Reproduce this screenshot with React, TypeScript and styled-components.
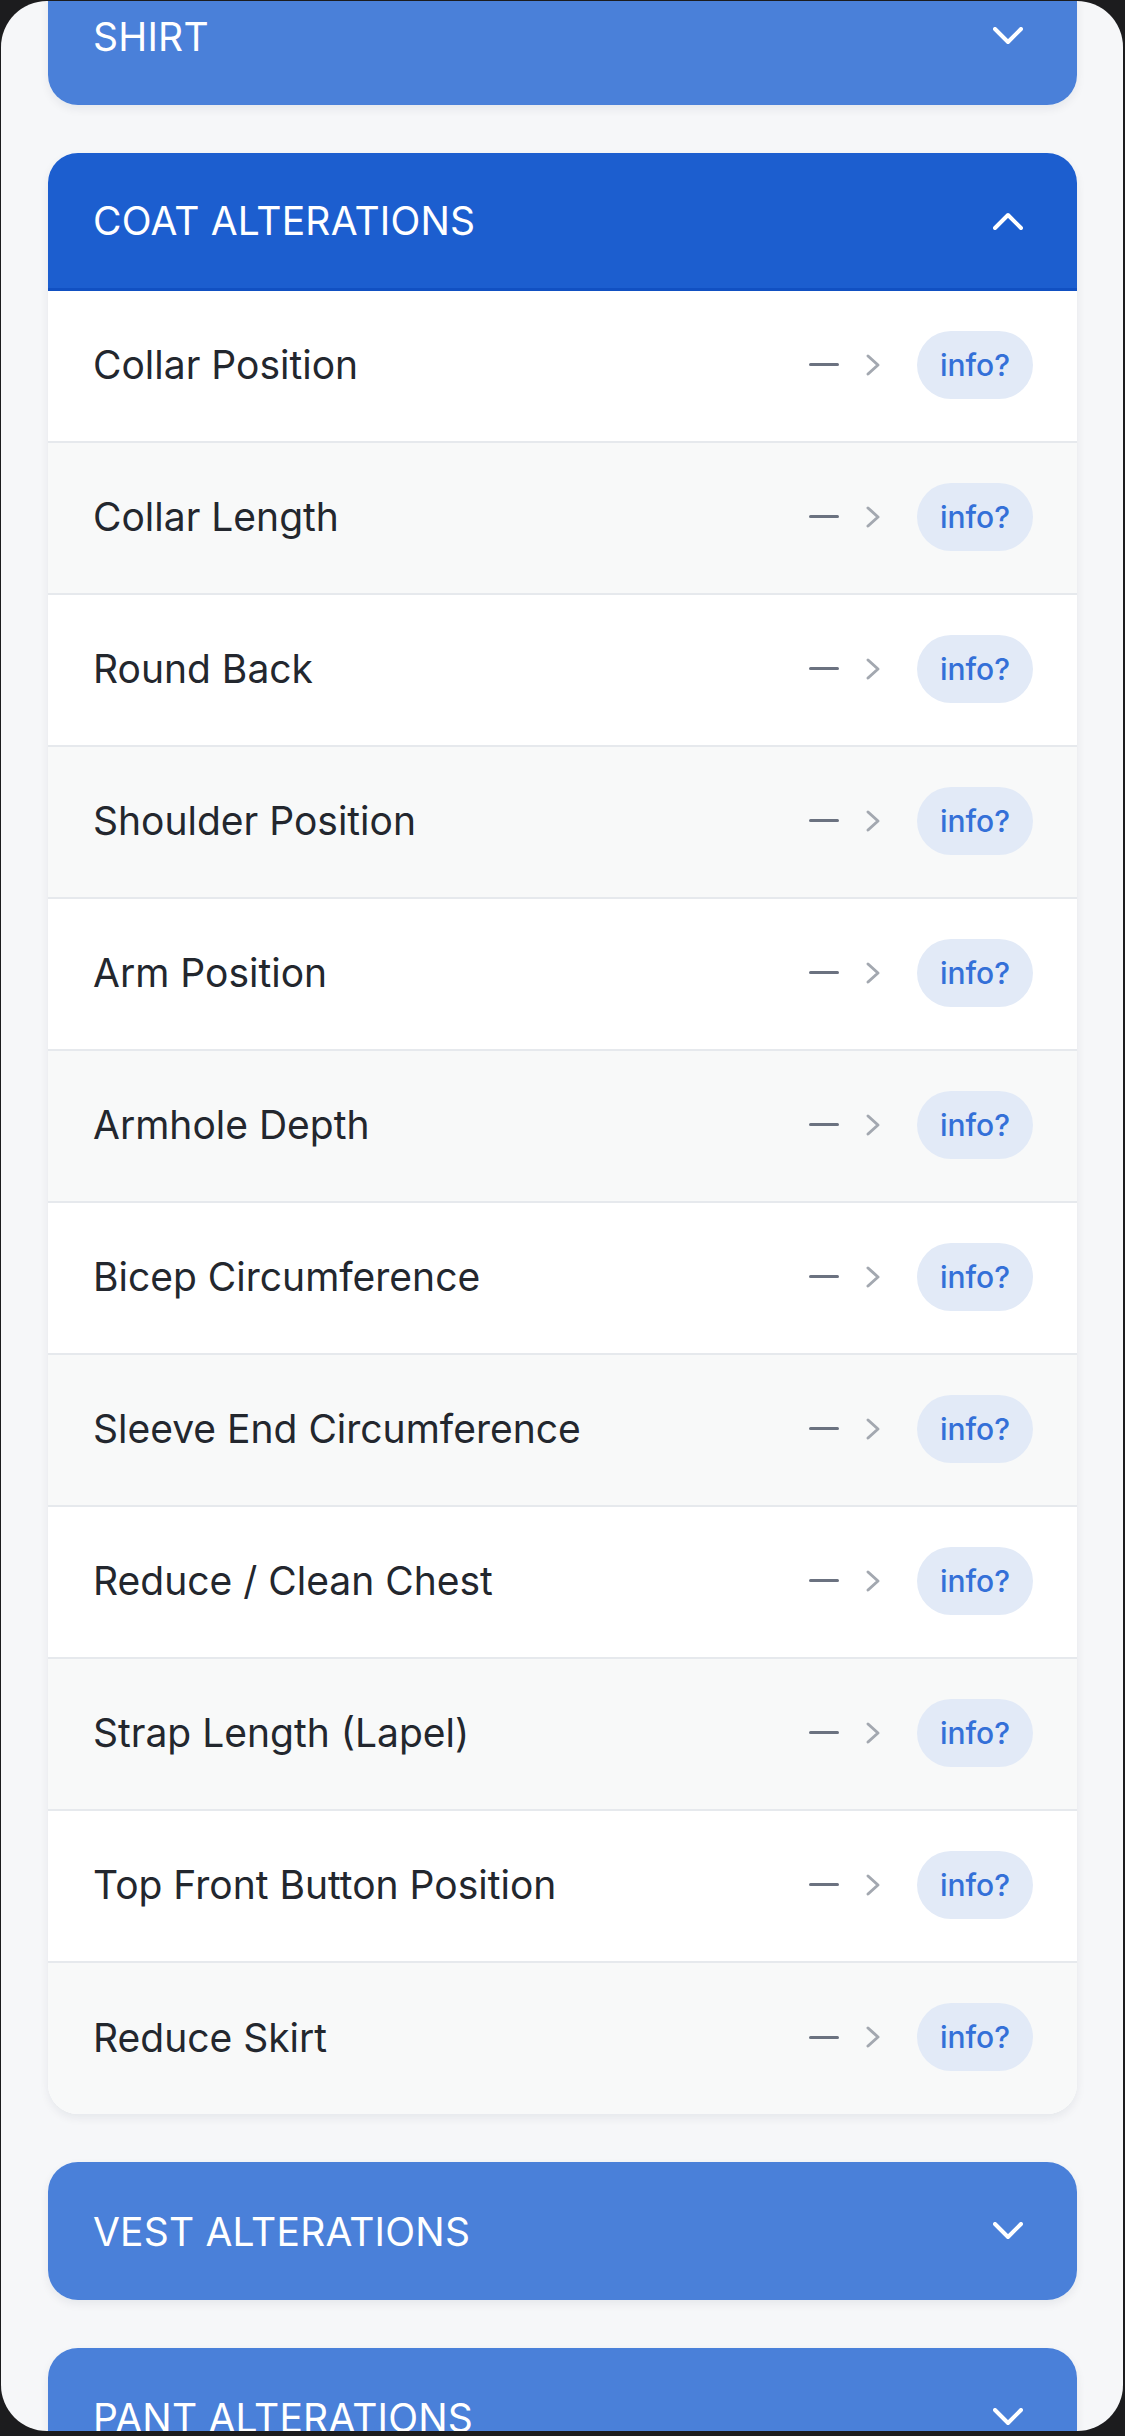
import styled, { createGlobalStyle } from "styled-components";

const GlobalStyle = createGlobalStyle`
    html, body {
        margin: 0;
        padding: 0;
        background: #1c1c1e;
    }
    * {
        box-sizing: border-box;
    }
`;

const Screen = styled.div`
    width: 1122px;
    height: 2430px;
    margin: 1px 0 0 1px;
    border-radius: 46px;
    overflow: hidden;
    background: #f6f7f9;
    font-family: Inter, "Liberation Sans", sans-serif;
`;

const List = styled.div`
    display: flex;
    flex-direction: column;
    gap: 48px;
    margin-top: -34px;
    padding: 0 46px 0 47px;
`;

const Card = styled.section`
    border-radius: 30px;
    overflow: hidden;
    background: #ffffff;
    box-shadow: 0 4px 10px rgba(20, 30, 50, 0.07);
`;

const Header = styled.div<{ $open?: boolean }>`
    height: 138px;
    display: flex;
    align-items: center;
    justify-content: space-between;
    padding: 0 54px 0 45px;
    background: ${props => (props.$open ? "#1c5ecf" : "#4a80d9")};
    border-bottom: ${props => (props.$open ? "3px solid #1150c2" : "none")};
    color: #ffffff;
`;

const Title = styled.span`
    font-size: 39px;
    font-weight: 400;
    letter-spacing: 0.2px;
    text-transform: uppercase;
`;

const Row = styled.div<{ $alt: boolean }>`
    height: 152px;
    display: flex;
    align-items: center;
    padding: 0 44px 3px 45px;
    background: ${props => (props.$alt ? "#f8f9f9" : "#ffffff")};
    border-bottom: 2px solid #e6e9ed;

    &:last-child {
        border-bottom: none;
        height: 151px;
    }
`;

const Label = styled.span`
    flex: 1;
    font-size: 39px;
    color: #23272e;
`;

const Dash = styled.span`
    width: 30px;
    height: 3px;
    border-radius: 2px;
    background: #6b7280;
`;

const Arrow = styled.svg`
    margin: 0 36px 0 26px;
    display: block;
`;

const InfoPill = styled.span`
    width: 116px;
    height: 68px;
    border-radius: 34px;
    background: #e2eaf7;
    color: #3470d8;
    font-size: 30px;
    font-weight: 500;
    display: flex;
    align-items: center;
    justify-content: center;
`;

const coatItems = [
    "Collar Position",
    "Collar Length",
    "Round Back",
    "Shoulder Position",
    "Arm Position",
    "Armhole Depth",
    "Bicep Circumference",
    "Sleeve End Circumference",
    "Reduce / Clean Chest",
    "Strap Length (Lapel)",
    "Top Front Button Position",
    "Reduce Skirt",
];

function Chevron({up}: { up?: boolean }) {
    return (
        <svg width="30" height="18" viewBox="0 0 30 18">
            <polyline
                points={up ? "2,16 15,3 28,16" : "2,2 15,15 28,2"}
                fill="none"
                stroke="#ffffff"
                strokeWidth="4"
                strokeLinecap="round"
                strokeLinejoin="round"
            />
        </svg>
    );
}

function Section({title, open, items}: { title: string; open?: boolean; items?: string[] }) {
    return (
        <Card>
            <Header $open={open}>
                <Title>{title}</Title>
                <Chevron up={open}/>
            </Header>
            {open && items?.map((item, i) => (
                <Row key={item} $alt={i % 2 === 1}>
                    <Label>{item}</Label>
                    <Dash/>
                    <Arrow width="16" height="24" viewBox="0 0 16 24">
                        <polyline points="3,3 13,12 3,21" fill="none" stroke="#a3a8b0" strokeWidth="3"
                                  strokeLinecap="round" strokeLinejoin="round"/>
                    </Arrow>
                    <InfoPill>info?</InfoPill>
                </Row>
            ))}
        </Card>
    );
}

export default function App() {
    return (
        <>
            <GlobalStyle/>
            <Screen>
                <List>
                    <Section title="Shirt"/>
                    <Section title="Coat Alterations" open items={coatItems}/>
                    <Section title="Vest Alterations"/>
                    <Section title="Pant Alterations"/>
                </List>
            </Screen>
        </>
    );
}
